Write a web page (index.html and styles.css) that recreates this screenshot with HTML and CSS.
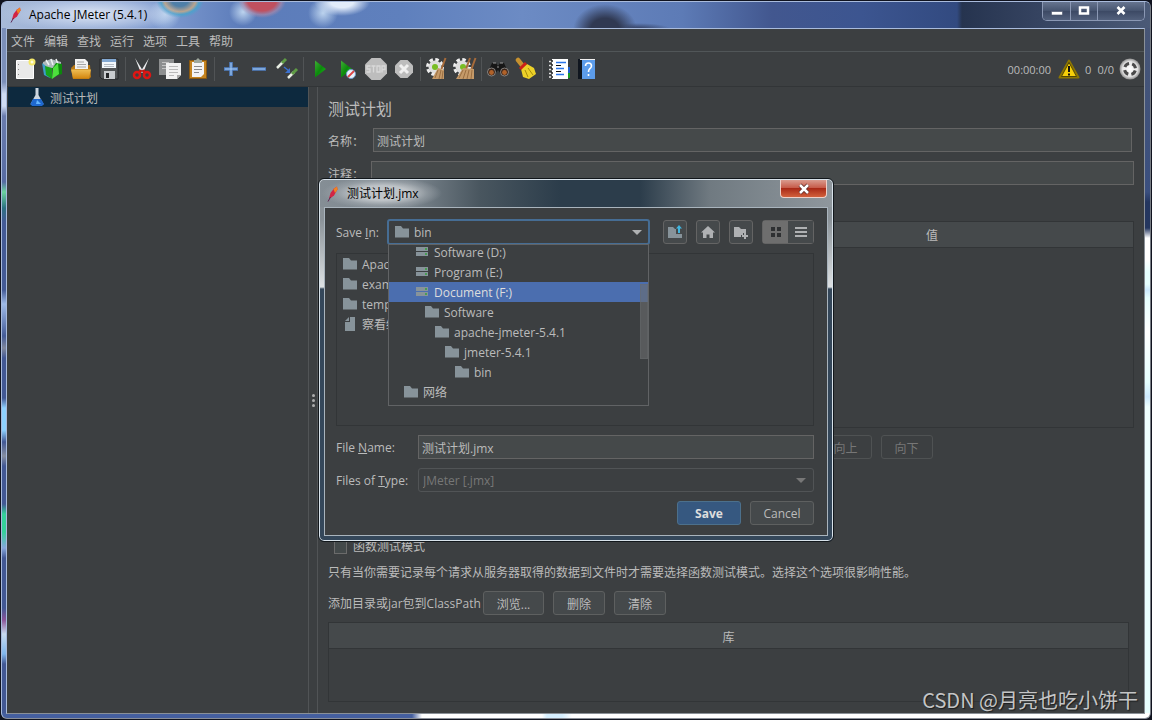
FILE: index.html
```html
<!DOCTYPE html>
<html lang="zh-CN">
<head>
<meta charset="utf-8">
<title>Apache JMeter (5.4.1)</title>
<link rel="stylesheet" href="styles.css">
</head>
<body>
<svg class="defs" aria-hidden="true">
  <defs>
    <linearGradient id="g-green" x1="0" y1="0" x2="1" y2="1"><stop offset="0" stop-color="#3fae35"/><stop offset=".5" stop-color="#0c8a0c"/><stop offset="1" stop-color="#19c619"/></linearGradient>
    <linearGradient id="g-folder" x1="0" y1="0" x2="0" y2="1"><stop offset="0" stop-color="#f0bf55"/><stop offset="1" stop-color="#d3860f"/></linearGradient>
    <radialGradient id="g-ball"><stop offset="0" stop-color="#fff"/><stop offset=".7" stop-color="#e6e6e6"/><stop offset="1" stop-color="#8e8e8e"/></radialGradient>
    <symbol id="folder" viewBox="0 0 14 12"><path d="M0 0h6l2 2.500h6V11.500H0z" fill="#87939a"/></symbol>
    <symbol id="drive" viewBox="0 0 12 10"><path d="M0 0h12v4H0zM0 5h12v4H0z" fill="#87939a"/><path d="M9 1h2v2H9zM9 6h2v2H9z" fill="#499c54"/></symbol>
    <symbol id="feather" viewBox="0 0 12 16"><path d="M2 12.500L3.500 7 7 2.500 10 .5l.5 3L7 9.500 3 12.500z" fill="#d22444"/><path d="M6.500 3L10 .5l.6 3L8 7z" fill="#f08322"/><path d="M3.500 11L1 15.500" stroke="#5e2a55"/></symbol>
  </defs>
</svg>

<div class="window">
  <header class="titlebar">
    <svg class="feather"><use href="#feather"/></svg>
    <h1 class="window-title">Apache JMeter (5.4.1)</h1>
    <div class="caption-buttons">
      <button class="caption" aria-label="最小化"><svg width="14" height="12"><path d="M1.500 6.500h11v3.500h-11z" fill="#fff" stroke="#46506a" stroke-width=".6"/></svg></button>
      <button class="caption" aria-label="最大化"><svg width="12" height="12"><path d="M2 2.500h8v6H2z" fill="none" stroke="#fff" stroke-width="2.500"/></svg></button>
      <button class="caption caption-wide" aria-label="关闭"><svg width="12" height="12"><path d="M2.500 2l7 7M9.500 2l-7 7" stroke="#fff" stroke-width="2.600"/></svg></button>
    </div>
  </header>

  <div class="client">
    <nav class="menubar">
      <button>文件</button><button>编辑</button><button>查找</button><button>运行</button><button>选项</button><button>工具</button><button>帮助</button>
    </nav>

    <div class="toolbar">
      <button class="tool" aria-label="新建"><svg viewBox="0 0 24 24"><path d="M3.500 3.500h17v18h-17z" fill="#e9e9e9" stroke="#fff"/><path d="M5 7.500h1M5 12.500h1M5 17.500h1" stroke="#888"/><circle cx="19" cy="5" r="3.500" fill="#f4e86a"/><circle cx="19" cy="5" r="1.500" fill="#fffde0"/></svg></button>
      <button class="tool" aria-label="模板"><svg viewBox="0 0 24 24"><path d="M2 5l8-3 10 3v6H2z" fill="#aeb9bd"/><path d="M5 3l3 5M10 2l2 6M15 2l2 5" stroke="#eef3f3" stroke-width="1.500"/><path d="M1 6l4 3 4 12-6-3z" fill="#3c9dc9"/><path d="M4 9l7 2v11l-6-4z" fill="#18a31c"/><path d="M11 12l4-6 6 1v10l-6 2z" fill="#0d870d"/><path d="M12 11l5-5 1 11-7 5z" fill="#4de03d"/></svg></button>
      <button class="tool" aria-label="打开"><svg viewBox="0 0 24 24"><path d="M6 2h10l3 3v9H6z" fill="#f2f2f2"/><path d="M8 5h7M8 7.500h9M8 10h9" stroke="#a4a4a4"/><path d="M2 11l3-3h1v4h13V8h2l1 12-2 2H4z" fill="#b87814"/><path d="M2 12.500h20l-2 9H4z" fill="url(#g-folder)"/></svg></button>
      <button class="tool" aria-label="保存"><svg viewBox="0 0 24 24"><path d="M3 2h18v20H5l-2-2z" fill="#525557" stroke="#27292a"/><path d="M5 2h14v9H5z" fill="#f2f7fb"/><path d="M5 2h14v3H5z" fill="#83a9d3"/><path d="M7 7.500h10M7 9.500h10" stroke="#b5bcc4"/><path d="M7 14h11v8H7z" fill="#c9cccf"/><path d="M9 16h3v5H9z" fill="#242628"/></svg></button>
      <i class="sep"></i>
      <button class="tool" aria-label="剪切"><svg viewBox="0 0 24 24"><path d="M5 1l8 13-2 2zM19 1l-8 13 2 2z" fill="#eceef0"/><path d="M11 13l-2 3M13 13l2 3" stroke="#c8120f" stroke-width="3"/><circle cx="7" cy="18" r="3" fill="none" stroke="#dc1614" stroke-width="2.500"/><circle cx="17" cy="18" r="3" fill="none" stroke="#dc1614" stroke-width="2.500"/></svg></button>
      <button class="tool" aria-label="复制"><svg viewBox="0 0 24 24"><path d="M1 2h15v16H1z" fill="#8d8f90"/><path d="M4 5.500h7M4 8.500h4M4 11.500h4" stroke="#c4c4c4"/><path d="M8 6h15v12l-4 4H8z" fill="#f1f1f1"/><path d="M11 9.500h9M11 12.500h9M11 15.500h9M11 18.500h5" stroke="#b9b9b9"/><path d="M23 18l-4 4v-4z" fill="#a9a9a9"/></svg></button>
      <button class="tool" aria-label="粘贴"><svg viewBox="0 0 24 24"><path d="M3.500 3.500h17v18h-17z" fill="#c6841f" stroke="#8a5810"/><path d="M6 5h12v12l-3 3H6z" fill="#f4f4f4"/><path d="M8 9.500h8M8 12.500h8M8 15.500h5" stroke="#8b8b8b"/><path d="M8 6V3h2l2-2 2 2h2v3z" fill="#9ea79d"/></svg></button>
      <i class="sep"></i>
      <button class="tool" aria-label="展开"><svg viewBox="0 0 24 24"><path d="M12 5v14M5 12h14" stroke="#5181c4" stroke-width="3.500"/><path d="M12 6v12M6 12h12" stroke="#a9ccf3"/></svg></button>
      <button class="tool" aria-label="折叠"><svg viewBox="0 0 24 24"><path d="M5 12h14" stroke="#5181c4" stroke-width="3.500"/><path d="M6 12h12" stroke="#a9ccf3"/></svg></button>
      <button class="tool" aria-label="切换"><svg viewBox="0 0 24 24"><path d="M2 11l6-6" stroke="#e8eee4" stroke-width="2.500"/><path d="M7 6l4-4" stroke="#5f9b45" stroke-width="3"/><path d="M13 21l6-6" stroke="#e8eee4" stroke-width="2.500"/><path d="M17 17l5-5" stroke="#5f9b45" stroke-width="3"/><path d="M9 10l5 4" stroke="#3c72d0" stroke-width="1.500"/><path d="M15 11v5h-5z" fill="#3c72d0"/></svg></button>
      <i class="sep"></i>
      <button class="tool" aria-label="启动"><svg viewBox="0 0 24 24"><path d="M7 3.500l11 8.500-11 8.500z" fill="url(#g-green)"/></svg></button>
      <button class="tool" aria-label="不停顿开始"><svg viewBox="0 0 24 24"><path d="M5 3.500l11 8.500-11 8.500z" fill="url(#g-green)"/><circle cx="15" cy="17" r="4.500" fill="#e9f2fb" stroke="#6f9acb"/><path d="M12 20l6-6" stroke="#d44" stroke-width="1.800"/></svg></button>
      <button class="tool" aria-label="停止"><svg viewBox="0 0 24 24"><path d="M7.500 1h9L23 7.500v9L16.500 23h-9L1 16.500v-9z" fill="#bdbdbd"/><path d="M6.500 9H3v3h3v3H2.500M7.500 9h4M9.500 9v6.500M13 9h3v6h-3zM18 15.500V9h3v3.500h-3" fill="none" stroke="#d9d9d9" stroke-width="1.300"/></svg></button>
      <button class="tool" aria-label="关闭"><svg viewBox="0 0 24 24"><path d="M8.500 3h7l5.500 5.500v7L15.500 21h-7L3 15.500v-7z" fill="#bdbdbd"/><path d="M8 8l8 8M16 8l-8 8" stroke="#f0f0f0" stroke-width="3"/></svg></button>
      <i class="sep"></i>
      <button class="tool" aria-label="清除"><svg viewBox="0 0 24 24"><circle cx="10" cy="10" r="7.500" fill="none" stroke="#eee" stroke-width="3" stroke-dasharray="3.500 2.400"/><circle cx="10" cy="10" r="6.500" fill="#dedede"/><circle cx="10" cy="10" r="3" fill="#78bd24"/><path d="M20.500 1l-4 11" stroke="#a76b3a" stroke-width="2"/><path d="M13 11l6 2v9H7z" fill="#c59a69"/><path d="M13 13l-3 8M16 13l-2 9M18 14l-1 8" stroke="#8e6237" stroke-width=".8"/></svg></button>
      <button class="tool" aria-label="清除全部"><svg viewBox="0 0 24 24"><circle cx="9" cy="10" r="7.500" fill="none" stroke="#eee" stroke-width="3" stroke-dasharray="3.500 2.400"/><circle cx="9" cy="10" r="6.500" fill="#dedede"/><circle cx="10" cy="10" r="3" fill="#78bd24"/><path d="M17 1l-4 11M22.500 1l-4 11" stroke="#a76b3a" stroke-width="2"/><path d="M10 11l11 1v10H3z" fill="#c59a69"/><path d="M10 13l-4 8M13 13l-3 9M16 13l-2 9M19 13l-1 9" stroke="#8e6237" stroke-width=".8"/></svg></button>
      <i class="sep"></i>
      <button class="tool" aria-label="搜索"><svg viewBox="0 0 24 24"><path d="M6 6h4l2 3 2-3h4l4 9-7 2-3-4-3 4-7-2z" fill="#171717"/><circle cx="5.500" cy="15" r="4" fill="#3a2418" stroke="#999" stroke-width=".8"/><circle cx="18.500" cy="15" r="4" fill="#3a2418" stroke="#999" stroke-width=".8"/><circle cx="5.500" cy="15.500" r="2.400" fill="#b0622a"/><circle cx="18.500" cy="15.500" r="2.400" fill="#b0622a"/><path d="M7 6h3M14 6h3M11 10h2" stroke="#999"/></svg></button>
      <button class="tool" aria-label="重置搜索"><svg viewBox="0 0 24 24"><path d="M4 3l4 5" stroke="#c6912f" stroke-width="4.500" stroke-linecap="round"/><path d="M7 12l6-5 7 4 2 6-7 5-6-2z" fill="#ecd128"/><path d="M11 13l3 7M14 11l5 7" stroke="#a68c0a"/><path d="M6 12l6-6" stroke="#cd2118" stroke-width="3"/></svg></button>
      <i class="sep"></i>
      <button class="tool" aria-label="函数助手"><svg viewBox="0 0 24 24"><path d="M15 10h8v7h-8z" fill="#1e5fd0"/><path d="M15 16h8v5h-8z" fill="#169b23"/><path d="M5 2h16v20H5z" fill="#fff"/><path d="M2 4.500h4M2 8.500h4M2 12.500h4M2 16.500h4M2 20h4" stroke="#e6e6e6" stroke-width="1.500"/><path d="M5 3v18" stroke="#222" stroke-width="1.500" stroke-dasharray="2 2"/><path d="M9 5.500h10M9 11.500h8M9 17.500h8" stroke="#2b75ea" stroke-width="1.500"/><path d="M9 8.500h5M9 14.500h5" stroke="#111"/></svg></button>
      <button class="tool" aria-label="帮助"><svg viewBox="0 0 24 24"><path d="M3 2h5v20H3z" fill="#10161f"/><path d="M7 3h13v19H7z" fill="#5c9cea"/><path d="M5 2.500h15" stroke="#f0f0f0"/><path d="M10.500 9q0-3 3-3t3 3q0 1.500-2 3-1 1-1 3M13.500 17v2" fill="none" stroke="#fff" stroke-width="1.600"/></svg></button>
      <div class="status">
        <span>00:00:00</span>
        <svg class="warn" viewBox="0 0 22 20"><path d="M11 1.500L20.500 18.500h-19z" fill="#f7cf08" stroke="#8d7600" stroke-width="2" stroke-linejoin="round"/><path d="M11 3.500L18.500 17.500h-15z" fill="none" stroke="#33300a" stroke-width=".8"/><path d="M11 7v6M11 14.500v2" stroke="#111" stroke-width="2"/></svg>
        <span>0</span>
        <span class="threads">0/0</span>
        <svg class="ball" viewBox="0 0 22 22"><circle cx="11" cy="11" r="10.500" fill="url(#g-ball)"/><circle cx="11" cy="11" r="5.500" fill="none" stroke="#4a4a4a" stroke-width="3" stroke-dasharray="5.400 3.240" stroke-dashoffset="-1.600"/></svg>
      </div>
    </div>

    <div class="workspace">
      <aside class="tree">
        <div class="tree-row">
          <svg width="14" height="18" viewBox="0 0 14 18"><path d="M5.500 0h3v7l5 9q0 1-2 1h-9q-2 0-2-1l5-9z" fill="#cdd6df"/><path d="M3 11h8l3 5-2 2H2L.5 16z" fill="#1e68cf"/><path d="M7 12l4 4H6z" fill="#63b5ff"/></svg>
          <span>测试计划</span>
        </div>
      </aside>
      <div class="splitter"><i></i><i></i><i></i></div>
      <main class="panel">
        <h2>测试计划</h2>
        <div class="field name-field"><label for="plan-name">名称：</label><input id="plan-name" type="text" value="测试计划"></div>
        <div class="field note-field"><label for="plan-note">注释：</label><input id="plan-note" type="text"></div>
        <table class="grid vars"><thead><tr><th></th><th>值</th></tr></thead><tbody><tr><td></td><td></td></tr></tbody></table>
        <div class="move-buttons"><button class="btn" disabled>向上</button><button class="btn" disabled>向下</button></div>
        <label class="check"><input type="checkbox"><span>函数测试模式</span></label>
        <p class="hint">只有当你需要记录每个请求从服务器取得的数据到文件时才需要选择函数测试模式。选择这个选项很影响性能。</p>
        <div class="classpath"><span>添加目录或jar包到ClassPath</span><button class="btn browse">浏览...</button><button class="btn">删除</button><button class="btn">清除</button></div>
        <table class="grid libs"><thead><tr><th>库</th></tr></thead><tbody><tr><td></td></tr></tbody></table>
      </main>
    </div>
  </div>
</div>

<div class="overlay">
  <section class="dialog" role="dialog" aria-labelledby="dialog-title">
    <header class="dialog-bar">
      <svg class="feather"><use href="#feather"/></svg>
      <h2 id="dialog-title">测试计划.jmx</h2>
      <button class="dialog-close" aria-label="关闭"><svg width="12" height="12"><path d="M2 2l8 8M10 2l-8 8" stroke="#5c2a26" stroke-width="4"/><path d="M2 2l8 8M10 2l-8 8" stroke="#fff" stroke-width="2.500"/></svg></button>
    </header>
    <form class="dialog-body">
      <div class="save-row">
        <label for="save-in">Save <u>I</u>n:</label>
        <div class="combo-wrap">
          <svg class="combo-icon" width="14" height="12"><use href="#folder"/></svg>
          <select id="save-in" class="combo focused"><option>bin</option></select>
          <div class="popup">
            <ul>
              <li class="d1"><svg width="12" height="10"><use href="#drive"/></svg><span>Software (D:)</span></li>
              <li class="d1"><svg width="12" height="10"><use href="#drive"/></svg><span>Program (E:)</span></li>
              <li class="d1 active"><svg width="12" height="10"><use href="#drive"/></svg><span>Document (F:)</span></li>
              <li class="d2"><svg width="14" height="12"><use href="#folder"/></svg><span>Software</span></li>
              <li class="d3"><svg width="14" height="12"><use href="#folder"/></svg><span>apache-jmeter-5.4.1</span></li>
              <li class="d4"><svg width="14" height="12"><use href="#folder"/></svg><span>jmeter-5.4.1</span></li>
              <li class="d5"><svg width="14" height="12"><use href="#folder"/></svg><span>bin</span></li>
              <li class="d0"><svg width="14" height="12"><use href="#folder"/></svg><span>网络</span></li>
            </ul>
            <i class="thumb"></i>
          </div>
        </div>
        <button type="button" class="icon-btn up" aria-label="Up One Level"><svg width="16" height="16"><path d="M1 3h5l2 2h1v5h6v4H1z" fill="#87939a"/><path d="M11 9V4.500H9L12 1l3 3.500h-2V9z" fill="#40b6e0"/></svg></button>
        <button type="button" class="icon-btn" aria-label="Home"><svg width="14" height="14"><path d="M7 1l7 6.500h-2V13H8.500V9.500h-3V13H2V7.500H0z" fill="#afb1b3"/></svg></button>
        <button type="button" class="icon-btn" aria-label="Create New Folder"><svg width="16" height="16"><path d="M1 3h5l2 2h5v4h-3v2H8v2H1z" fill="#afb1b3"/><path d="M12 9v6M9 12h6" stroke="#afb1b3" stroke-width="2"/></svg></button>
        <div class="view-toggle">
          <button type="button" class="on" aria-label="List"><svg width="12" height="12"><path d="M1 1h4v4H1zM7 1h4v4H7zM1 7h4v4H1zM7 7h4v4H7z" fill="#2e3032"/></svg></button>
          <button type="button" aria-label="Details"><svg width="14" height="12"><path d="M1 2h12M1 6h12M1 10h12" stroke="#afb1b3" stroke-width="2"/></svg></button>
        </div>
      </div>
      <ul class="files">
        <li><svg width="14" height="12"><use href="#folder"/></svg><span>ApacheJMeter</span></li>
        <li><svg width="14" height="12"><use href="#folder"/></svg><span>examples</span></li>
        <li><svg width="14" height="12"><use href="#folder"/></svg><span>templates</span></li>
        <li><svg width="14" height="14"><path d="M7 0h5v14H2V5h5zM6 0v4H2z" fill="#87939a"/></svg><span>察看结果树</span></li>
      </ul>
      <div class="form-row"><label for="file-name">File <u>N</u>ame:</label><input id="file-name" type="text" value="测试计划.jmx"></div>
      <div class="form-row"><label for="file-type">Files of <u>T</u>ype:</label><select id="file-type" class="combo" disabled><option>JMeter [.jmx]</option></select></div>
      <div class="actions"><button type="button" class="btn primary">Save</button><button type="button" class="btn">Cancel</button></div>
    </form>
  </section>
</div>
<div class="watermark">CSDN @月亮也吃小饼干</div>
</body>
</html>
```

FILE: styles.css
```css
* { box-sizing: border-box; }

body {
  margin: 0;
  min-height: 100vh;
  display: flex;
  padding: 1px;
  background: #10131f;
  color: #bbbbbb;
  font: 12px/16px "Open Sans", "Noto Sans CJK SC", sans-serif;
}

button, input, select { font: inherit; color: inherit; margin: 0; }
button { padding: 0; border: 0; background: none; }
h1, h2, p, ul { margin: 0; padding: 0; font-size: 12px; font-weight: 400; }
ul { list-style: none; }
svg { display: block; flex: none; }
.defs { position: absolute; width: 0; height: 0; }

/* main window frame */
.window {
  flex: 1;
  display: flex;
  flex-direction: column;
  min-width: 0;
  padding: 0 5px 4px 4px;
  border: 1px solid #a9bbdc;
  border-right-color: #777c84;
  border-bottom-color: #8a8f98;
  border-radius: 6px;
  background:
    linear-gradient(90deg, #455f9f 0 410px, #fff 420px 540px, #d6efff 545px 560px, #fff 570px) bottom / 100% 5px no-repeat,
    linear-gradient(#4a5774 0, #3a4f7f 190px, #24365f 200px, #24365f 226px, #fff 236px 258px, #e6ffff 270px 282px, #cdeaff 288px, #e6ffff 296px, #fff 330px, #e6ffff 380px, #cdeaff 395px, #efffff 405px, #e8ffff 100%) right / 6px 100% no-repeat,
    linear-gradient(#7b8fb9 0 80px, #cfdcf3 92px 104px, #6a7cad 114px, #566ba2 180px, #6bd39f 190px, #2d7182 206px, #435a96 220px 288px, #9fbbe8 302px, #445b97 334px, #7f879c 346px, #425894 356px 396px, #8ed2ff 406px 428px, #425894 440px, #858ea0 454px, #425894 464px 502px, #35d09a 512px 530px, #86a7dc 546px, #425894 556px 606px, #8b5599 618px, #c8dbee 632px, #7fb6ec 652px, #425894 662px) left / 5px 100% no-repeat,
    #425894;
}

.titlebar {
  height: 26px;
  display: flex;
  align-items: center;
  gap: 7px;
  margin: 0 -5px 0 -4px;
  padding: 0 5px 0 8px;
  border-radius: 5px 5px 0 0;
  background:
    radial-gradient(ellipse 90px 18px at 90px 12px, #e4ebf7ee, #c5d3eb99 60%, transparent),
    radial-gradient(ellipse 24px 18px at 178px -2px, #4f7fa8 0 35%, #b9a48f 65%, #4fa0cc 80%, transparent),
    radial-gradient(circle 16px at 163px 12px, #bcd3ee, transparent),
    radial-gradient(ellipse 24px 18px at 260px -2px, #c0505f 0 60%, #b28aa899 82%, transparent),
    radial-gradient(circle 14px at 241px 10px, #bcd3ee, transparent),
    radial-gradient(ellipse 28px 14px at 340px 0, #e2ecfa 0 40%, transparent),
    radial-gradient(circle 15px at 321px 11px, #bcd3ee, transparent),
    radial-gradient(ellipse 32px 26px at 603px 28px, #303952 0 45%, #3a4767cc 65%, transparent),
    radial-gradient(ellipse 34px 6px at 635px 27px, #2f3a5a, transparent),
    linear-gradient(90deg, #a8bad8 0, #7f9bd0 160px, #5c7cba 240px, #5f80bd 400px, #6c8bc4 520px, #5d7bb6 680px, #42578f 770px, #3c5590 860px, #324a80 955px, #26344f 960px, #34425f 1030px, #4b5a77);
  color: #000;
}
.feather { width: 12px; height: 16px; }
.window-title { flex: 1; }

.caption-buttons {
  align-self: flex-start;
  display: flex;
  border: 1px solid #8b98b4;
  border-top: 0;
  border-radius: 0 0 5px 5px;
}
.caption {
  width: 27px;
  height: 18px;
  display: grid;
  place-items: center;
  border-left: 1px solid #8b98b4;
  background: linear-gradient(#66748f, #46546f 50%, #3c4964 50%, #52607c);
}
.caption:first-child { border-left: 0; border-radius: 0 0 0 4px; }
.caption-wide { width: 47px; border-radius: 0 0 4px 0; }

.client {
  flex: 1;
  display: flex;
  flex-direction: column;
  border: 1px solid #a9bbdc;
  border-right-color: #8a9097;
  border-bottom-color: #8a9097;
  background: #3c3f41;
}

.menubar {
  height: 23px;
  display: flex;
  align-items: center;
  gap: 9px;
  padding: 3px 4px 0;
  border-bottom: 1px solid #515658;
}

.toolbar {
  height: 35px;
  display: flex;
  align-items: center;
  padding: 0 3px 0 4px;
  border-bottom: 1px solid #323537;
}
.tool { width: 28px; height: 28px; display: grid; place-items: center; }
.tool svg { width: 24px; height: 24px; }
.sep { width: 1px; height: 24px; margin: 0 2px; background: #515456; }
.status {
  margin-left: auto;
  display: flex;
  align-items: center;
  gap: 5px;
  font-size: 11px;
}
.status .warn { width: 22px; height: 20px; margin-left: 2px; }
.status .ball { width: 22px; height: 22px; }
.status span { padding-top: 1px; }
.threads { margin-left: 1px; }

.workspace { flex: 1; display: flex; min-height: 0; }
.tree { width: 302px; flex: none; padding-left: 1px; border-right: 1px solid #515456; }
.tree-row {
  height: 20px;
  display: flex;
  align-items: center;
  gap: 6px;
  padding-left: 22px;
  background: #0d293e;
}
.tree-row span { padding-top: 3px; }
.splitter {
  width: 9px;
  flex: none;
  display: flex;
  flex-direction: column;
  justify-content: center;
  align-items: center;
  gap: 2px;
  border-right: 1px solid #515456;
}
.splitter i { width: 3px; height: 3px; border-radius: 50%; background: #adadad; }

.panel {
  flex: 1;
  min-width: 0;
  display: flex;
  flex-direction: column;
  padding: 10px 10px 11px;
}
.panel h2 { font-size: 16px; line-height: 24px; }
.field { display: flex; align-items: center; }
.field label { width: 45px; flex: none; padding-top: 3px; }
.name-field { margin: 7px 2px 9px 0; }
.note-field label { width: 43px; }
input[type="text"] {
  flex: 1;
  min-width: 0;
  height: 24px;
  padding: 2px 3px 0;
  border: 1px solid #646464;
  border-radius: 0;
  background: #45494a;
}

.grid { width: 100%; border-collapse: collapse; table-layout: fixed; border: 1px solid #323537; }
.grid th {
  height: 26px;
  padding: 3px 0 0;
  border-bottom: 1px solid #323537;
  background: #45494b;
  font-weight: 400;
}
.vars { height: 207px; margin-top: 36px; }
.move-buttons {
  display: flex;
  justify-content: center;
  gap: 9px;
  margin-top: 7px;
  padding-left: 290px;
}
.btn {
  width: 52px;
  height: 24px;
  padding-top: 3px;
  border: 1px solid #5e6060;
  border-radius: 3px;
  background: #45494b;
}
.btn:disabled { border-color: #4f5253; background: none; color: #777777; }
.check {
  display: flex;
  align-items: center;
  gap: 6px;
  margin-top: 80px;
  padding-left: 6px;
}
.check input {
  appearance: none;
  width: 13px;
  height: 13px;
  border: 1px solid #6b6b6b;
  background: #43494a;
}
.hint { margin-top: 10px; }
.classpath { display: flex; align-items: center; gap: 9px; margin-top: 10px; }
.classpath span { width: 146px; white-space: nowrap; padding-top: 2px; }
.browse { width: 61px; }
.libs { flex: 1; width: auto; display: flex; flex-direction: column; margin: 7px 5px 0 0; }
.libs thead, .libs tr, .libs th { display: block; }
.libs th { line-height: 23px; }

/* save dialog */
.overlay { position: absolute; inset: 0; display: grid; place-items: center; }
.dialog {
  width: 516px;
  padding: 0 5px;
  padding-bottom: 5px;
  border: 1px solid #12171b;
  border-radius: 6px;
  box-shadow: inset 0 0 0 1px #d8e2ea;
  background:
    linear-gradient(#8a9298 0, #8a9298 40px, #dde1e3 108px, #34475a 110px, #34475a 100%);
}
.dialog-bar {
  height: 27px;
  display: flex;
  align-items: center;
  gap: 8px;
  margin: 1px -4px 0;
  padding: 0 5px 0 7px;
  border-radius: 5px 5px 0 0;
  background:
    radial-gradient(ellipse 60px 16px at 62px 13px, #bfc4c8 0 45%, #a5acb288 75%, transparent),
    linear-gradient(90deg, #858e95 0, #7c868e 90px, #49565f 160px, #2c3d4b 240px, #2c3d4b 320px, #707a81 390px, #8f979d);
  color: #000;
}
.dialog-bar h2 { flex: 1; }
.dialog-close {
  align-self: flex-start;
  width: 47px;
  height: 18px;
  display: grid;
  place-items: center;
  border: 1px solid #efd0c8;
  border-top: 0;
  border-radius: 0 0 4px 4px;
  background: linear-gradient(#d99b8e, #c75c4a 45%, #a92a17 50%, #d2603b);
}
.dialog-body {
  display: flex;
  flex-direction: column;
  gap: 9px;
  padding: 12px 13px 10px 11px;
  border: 1px solid #a9b4bd;
  background: #3c3f41;
}
.save-row { display: flex; align-items: center; gap: 9px; }
.save-row label { width: 42px; flex: none; white-space: nowrap; padding-top: 2px; }
.combo-wrap { position: relative; flex: 1; display: flex; margin: -1px 0; }
.combo-icon { position: absolute; left: 8px; top: 7px; }
.combo {
  appearance: none;
  flex: 1;
  min-width: 0;
  height: 24px;
  padding: 1px 4px 0;
  border: 1px solid #646464;
  border-radius: 3px;
  background: linear-gradient(#3c3f41, #3c3f41);
}
.combo:disabled { border-color: #515456; color: #777777; opacity: 1; }
.focused { height: 26px; padding-left: 25px; border: 2px solid #466d94; }
.combo-wrap::after, .form-row:has(select)::after {
  content: "";
  position: absolute;
  right: 8px;
  top: 11px;
  border: 5px solid transparent;
  border-top-color: #afb1b3;
  border-bottom: 0;
}
.form-row:has(select)::after { top: 10px; border-top-color: #777777; }
.popup {
  position: absolute;
  z-index: 2;
  top: 25px;
  left: 1px;
  right: 1px;
  padding-bottom: 3px;
  border: 1px solid #616365;
  background: #3c3f41;
  overflow: hidden;
}
.popup ul { margin-top: -3px; }
.popup li, .files li { height: 20px; display: flex; align-items: center; gap: 5px; }
.popup li span, .files li span { padding-top: 2px; }
.popup .active { background: #4b6eaf; color: #dddddd; }
.popup .d0 { padding-left: 15px; }
.popup .d1 { padding-left: 27px; gap: 6px; }
.popup .d2 { padding-left: 36px; }
.popup .d3 { padding-left: 46px; }
.popup .d4 { padding-left: 56px; }
.popup .d5 { padding-left: 66px; }
.thumb {
  position: absolute;
  right: 0;
  top: 39px;
  width: 8px;
  height: 75px;
  border: 1px solid #6a6c6e66;
  background: #6a6c6e99;
}
.icon-btn {
  width: 24px;
  height: 24px;
  flex: none;
  display: grid;
  place-items: center;
  border: 1px solid #646464;
  border-radius: 3px;
  background: #45494b;
}
.up { margin-left: 4px; }
.view-toggle { display: flex; border: 1px solid #646464; border-radius: 3px; }
.view-toggle button { width: 25px; height: 22px; display: grid; place-items: center; background: #45494b; }
.view-toggle .on { background: #6e6e6e; }
.files { height: 173px; padding: 0 6px; border: 1px solid #323537; }
.form-row { position: relative; display: flex; align-items: center; }
.form-row label { width: 82px; flex: none; padding-top: 2px; }
.actions { display: flex; justify-content: flex-end; gap: 9px; }
.actions .btn { width: 64px; padding-top: 1px; }
.actions .primary { border-color: #4c708c; background: #365880; color: #dddddd; font-weight: 700; }

.watermark {
  position: absolute;
  right: 14px;
  bottom: 6px;
  color: #c4c5c6;
  font: 20px/28px "Noto Sans CJK SC", sans-serif;
  text-shadow: 1px 1px 1px #1b1d1e;
}
```
